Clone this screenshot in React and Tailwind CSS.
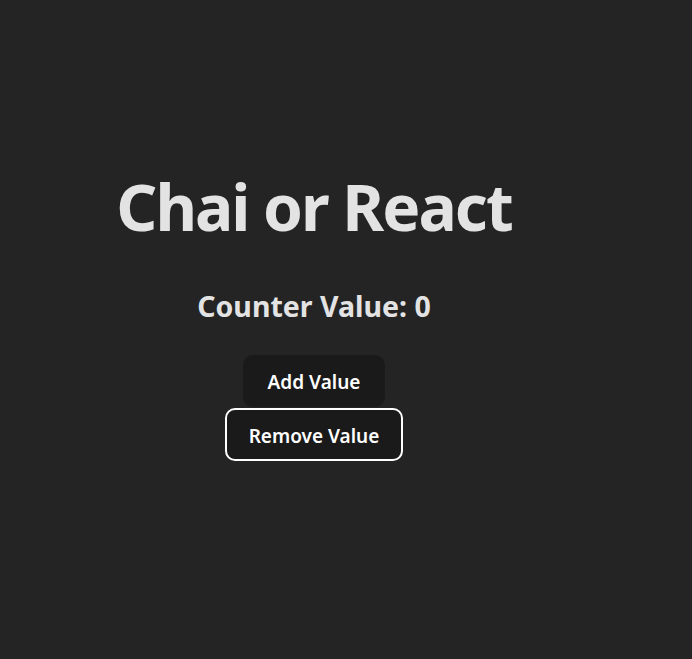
import { useState } from "react";

const App = () => {
  const [counter, setCounter] = useState(0);

  const addValue = () => {
    setCounter((prev) => prev + 1);
  };

  const removeValue = () => {
    setCounter((prev) => (prev > 0 ? prev - 1 : 0));
  };

  return (
    <div className="min-h-screen bg-[#242424] text-[#e3e3e3] font-['Noto_Sans',sans-serif]">
      <div className="w-[628px] flex flex-col items-center pt-[175px]">
        <h1 className="text-[64px] leading-none font-bold tracking-[-2px]">Chai or React</h1>

        <h2 className="mt-[53px] text-[28.5px] leading-none font-bold">Counter Value: {counter}</h2>

        <button
          onClick={addValue}
          className="mt-[34px] h-[52px] px-[23px] pt-[4px] bg-[#1a1a1a] text-white text-[19px] font-semibold rounded-[10px] border-2 border-transparent"
        >
          Add Value
        </button>
        <button
          onClick={removeValue}
          className="mt-[1px] h-[53px] px-[22px] pt-[4px] bg-[#1a1a1a] text-white text-[19px] font-semibold rounded-[10px] border-2 border-white"
        >
          Remove Value
        </button>
      </div>
    </div>
  );
};

export default App;
